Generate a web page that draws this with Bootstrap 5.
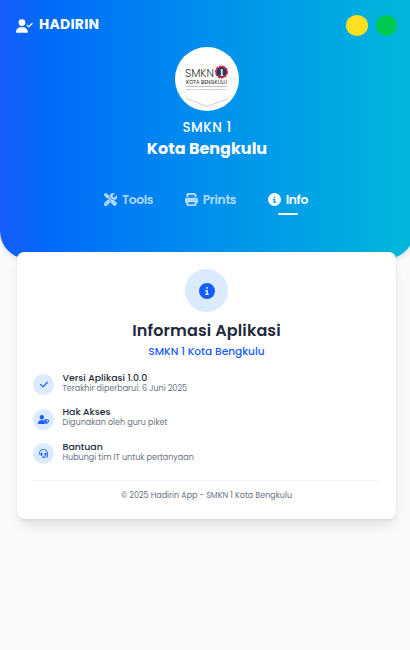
<!DOCTYPE html>
<html lang="id">
<head>
<meta charset="utf-8">
<meta name="viewport" content="width=device-width, initial-scale=1">
<title>Hadirin</title>
<link href="https://cdn.jsdelivr.net/npm/bootstrap@5.3.0/dist/css/bootstrap.min.css" rel="stylesheet">
<style>
body{font-family:Poppins,Inter,"Open Sans",sans-serif;background:#f9fafb;min-height:650px;overflow:hidden}
svg{display:block;fill:currentColor;flex:none}
.hero{width:414px;height:259px;border-radius:0 0 28px 28px;background:linear-gradient(to right,#155dfc,#0069ff 12%,#0090ee 50%,#00b8db);background:linear-gradient(to right in oklab,oklch(54.6% .245 262.881),oklch(71.5% .143 215.221));box-shadow:0 2px 5px rgba(0,0,0,.12)}
.topbar{height:51px;padding-left:16px;padding-right:17px}
.brand{font-size:14px;line-height:20px;letter-spacing:.25px;margin-left:6px;margin-top:-4px}
.dots{margin-top:-1px}
.dot{width:21.5px;height:21px}
.dot-y{background:#ffdf20}.dot-g{background:#00c951}
.school-logo{width:64px;height:64px;margin-top:-4px}
.school-type{font-size:13.3px;line-height:18px;letter-spacing:.55px;margin-top:8px}
.school-name{font-size:16px;line-height:22px;margin-top:1px}
.tabs-row{margin-top:30px;gap:31.500px;padding-right:2px}
.tab-item{font-size:12.25px;line-height:20px;letter-spacing:-.3px;color:rgba(255,255,255,.7);gap:5px;height:34px;align-items:flex-start}
.tab-item svg{margin-top:3px}
.tab-item.current{color:#fff}
.current::after{content:"";position:absolute;left:10px;top:23px;width:20px;height:2px;border-radius:2px;background:#fff}
.info-card{margin:-7px 14px 0 17px;height:267px;border-radius:7px;padding:17px 16px 0;box-shadow:0 9px 13px -3px rgba(0,0,0,.1),0 3px 5px -3px rgba(0,0,0,.1),0 0 2px rgba(0,0,0,.08)}
.soft{background:#dbeafe;color:#155dfc}
.big-ic{width:43px;height:43px}
.card-head{font-size:16px;line-height:24px;letter-spacing:.12px;color:#1e2939;margin-top:7px}
.card-sub{font-size:10.6px;line-height:16px;color:#155dfc;margin-top:1px}
.items{margin-top:13px;gap:13.5px}
.item{height:21px;gap:8.500px}
.ic{width:21px;height:21px;margin-top:1px}
.it-t{font-size:9.35px;line-height:11px;color:#1e2939;margin-top:-1.2px}
.it-d{font-size:8px;line-height:11px;color:#6a7282}
.foot{margin-top:17px;border-top:1px solid #f3f4f6;font-size:8px;line-height:12px;color:#6a7282;padding-top:9px}
</style>
<script src="https://cdn.jsdelivr.net/npm/bootstrap@5.3.0/dist/js/bootstrap.bundle.min.js"></script>
</head>
<body>
<header class="hero text-white">
  <div class="topbar d-flex align-items-center justify-content-between">
    <div class="d-flex align-items-center">
      <svg width="17" height="14" viewBox="0 0 640 512"><path d="M96 128a128 128 0 1 1 256 0A128 128 0 1 1 96 128zM0 482.3C0 383.8 79.8 304 178.3 304h91.4C368.2 304 448 383.8 448 482.3c0 16.4-13.3 29.7-29.7 29.7H29.7C13.3 512 0 498.7 0 482.3zM625 177L497 305c-9.4 9.4-24.6 9.4-33.9 0l-64-64c-9.4-9.4-9.4-24.6 0-33.9s24.6-9.4 33.9 0l47 47L591 143c9.4-9.4 24.6-9.4 33.9 0s9.4 24.6 0 33.9z"/></svg>
      <span class="brand fw-bold">HADIRIN</span>
    </div>
    <div class="dots d-flex gap-2"><span class="dot dot-y rounded-circle"></span><span class="dot dot-g rounded-circle"></span></div>
  </div>
  <div class="d-flex flex-column align-items-center">
    <svg class="school-logo" viewBox="0 0 64 64">
      <circle cx="32" cy="32" r="32" fill="#fff"/>
      <path d="M6 14v32L32 60l25-10V14" fill="none" stroke="#f4f4f4" stroke-width=".6"/>
      <path d="M11 51.500L32 59.500 53 51.500" fill="none" stroke="#b5b5b5" stroke-width=".6"/>
      <text x="10" y="29.500" font-size="10.500" font-weight="300" textLength="29" lengthAdjust="spacingAndGlyphs" fill="#333">SMKN</text>
      <circle cx="46.500" cy="25" r="5.600" fill="#1e3a6b" stroke="#d22c45" stroke-width="2" stroke-dasharray="2.600 .7"/>
      <text x="46.500" y="28.500" font-size="9.500" font-weight="700" font-family="Liberation Serif" text-anchor="middle" fill="#fff">1</text>
      <text x="11" y="37" font-size="5.300" font-weight="400" textLength="41" lengthAdjust="spacingAndGlyphs" fill="#222">KOTA BENGKULU</text>
      <path d="M11 39.500H52" stroke="#999" stroke-width=".6"/>
      <text x="11" y="43.300" font-size="2.200" textLength="41" lengthAdjust="spacingAndGlyphs" fill="#777">SEMARAK, UNGGUL &amp; TERPERCAYA</text>
    </svg>
    <div class="school-type fw-medium">SMKN 1</div>
    <div class="school-name fw-bold">Kota Bengkulu</div>
  </div>
  <nav class="tabs-row d-flex justify-content-center fw-semibold">
    <a class="tab-item d-flex text-decoration-none"><svg width="13" height="13" viewBox="0 0 512 512"><path stroke="currentColor" stroke-width="12" d="M78.600 5C69.100-2.400 55.600-1.500 47 7L7 47c-8.500 8.500-9.400 22-2.100 31.600l80 104c4.500 5.900 11.600 9.400 19 9.400h54.100l109 109c-14.700 29-10 65.400 14.300 89.600l112 112c12.500 12.500 32.800 12.500 45.300 0l64-64c12.500-12.500 12.500-32.800 0-45.300l-112-112c-24.200-24.200-60.600-29-89.600-14.300l-109-109V104c0-7.500-3.500-14.500-9.400-19L78.600 5zM19.900 396.100C7.200 408.800 0 426.100 0 444.100C0 481.600 30.400 512 67.900 512c18 0 35.300-7.200 48-19.900L233.700 374.300c-7.800-20.900-9-43.600-3.600-65.100l-61.700-61.700L19.900 396.100zM512 144c0-10.500-1.100-20.700-3.200-30.500c-2.400-11.200-16.100-14.100-24.200-6l-63.900 63.900c-3 3-7.100 4.700-11.300 4.700H352c-8.800 0-16-7.200-16-16V102.600c0-4.200 1.700-8.300 4.700-11.300l63.900-63.900c8.100-8.100 5.200-21.800-6-24.200C388.700 1.100 378.500 0 368 0C288.500 0 224 64.500 224 144l0 .8 85.300 85.300c36-9.100 75.800 .5 104 28.700L429 274.500c49-23 83-72.800 83-130.500zM56 432a24 24 0 1 1 48 0 24 24 0 1 1 -48 0z"/></svg><span>Tools</span></a>
    <a class="tab-item d-flex text-decoration-none"><svg width="13" height="13" viewBox="0 0 512 512"><path stroke="currentColor" stroke-width="12" d="M128 0C92.700 0 64 28.700 64 64v96h64V64H354.700L384 93.300V160h64V93.300c0-17-6.700-33.300-18.700-45.300L400 18.700C388 6.700 371.700 0 354.700 0H128zM384 352v32 64H128V384 368 352H384zm64 32h32c17.700 0 32-14.300 32-32V256c0-35.300-28.700-64-64-64H64c-35.300 0-64 28.700-64 64v96c0 17.700 14.300 32 32 32H64v64c0 35.300 28.700 64 64 64H384c35.300 0 64-28.700 64-64V384zM432 248a24 24 0 1 1 0 48 24 24 0 1 1 0-48z"/></svg><span>Prints</span></a>
    <a class="tab-item current d-flex text-decoration-none position-relative"><svg width="13" height="13" viewBox="0 0 512 512"><path id="info" d="M256 512A256 256 0 1 0 256 0a256 256 0 1 0 0 512zM216 336h24V272H216c-13.300 0-24-10.700-24-24s10.700-24 24-24h48c13.300 0 24 10.700 24 24v88h8c13.300 0 24 10.700 24 24s-10.700 24-24 24H216c-13.300 0-24-10.700-24-24s10.700-24 24-24zm40-208a32 32 0 1 1 0 64 32 32 0 1 1 0-64z"/></svg><span>Info</span></a>
  </nav>
</header>
<main class="info-card bg-white position-relative">
  <div class="d-flex flex-column align-items-center">
    <div class="big-ic soft rounded-circle d-flex align-items-center justify-content-center"><svg width="16" height="16" viewBox="0 0 512 512"><use href="#info"/></svg></div>
    <div class="card-head fw-semibold">Informasi Aplikasi</div>
    <div class="card-sub fw-medium">SMKN 1 Kota Bengkulu</div>
  </div>
  <div class="items d-flex flex-column">
    <div class="item d-flex"><div class="ic soft rounded-circle d-flex align-items-center justify-content-center"><svg width="8" height="9" viewBox="0 0 448 512"><path d="M438.600 105.400c12.500 12.500 12.500 32.800 0 45.300l-256 256c-12.500 12.500-32.800 12.500-45.300 0l-128-128c-12.500-12.500-12.500-32.800 0-45.300s32.800-12.500 45.300 0L160 338.700 393.400 105.400c12.500-12.500 32.800-12.500 45.300 0z"/></svg></div><div><div class="it-t fw-medium">Versi Aplikasi 1.0.0</div><div class="it-d">Terakhir diperbarui: 6 Juni 2025</div></div></div>
    <div class="item d-flex"><div class="ic soft rounded-circle d-flex align-items-center justify-content-center"><svg width="11" height="9" viewBox="0 0 640 512"><path fill-rule="evenodd" d="M96 128a128 128 0 1 1 256 0A128 128 0 1 1 96 128zM0 482C0 384 80 304 178 304h91c24 0 46 4 67 13 3 75 38 145 94 193-4 1-8 2-12 2H30C13 512 0 499 0 482zM496 225l120 48c15 6 24 17 24 31 0 95-40 171-144 208-104-37-144-113-144-208 0-14 9-25 24-31zM496 286v161c56-28 79-75 80-130z"/></svg></div><div><div class="it-t fw-medium">Hak Akses</div><div class="it-d">Digunakan oleh guru piket</div></div></div>
    <div class="item d-flex"><div class="ic soft rounded-circle d-flex align-items-center justify-content-center"><svg width="9" height="9" viewBox="0 0 512 512"><path d="M256 48C141 48 48 141 48 256v40c0 13-11 24-24 24S0 309 0 296v-40C0 115 115 0 256 0s256 115 256 256v144c0 49-39 88-88 88H313c-8 14-24 24-41 24h-32a48 48 0 0 1 0-96h32c17 0 33 10 41 24h111c22 0 40-18 40-40V256C464 141 371 48 256 48zM144 208h16c18 0 32 14 32 32v112c0 18-14 32-32 32h-16c-35 0-64-29-64-64v-48c0-35 29-64 64-64zm224 0c35 0 64 29 64 64v48c0 35-29 64-64 64h-16c-18 0-32-14-32-32V240c0-18 14-32 32-32z"/></svg></div><div><div class="it-t fw-medium">Bantuan</div><div class="it-d">Hubungi tim IT untuk pertanyaan</div></div></div>
  </div>
  <div class="foot text-center">© 2025 Hadirin App - SMKN 1 Kota Bengkulu</div>
</main>
</body>
</html>
